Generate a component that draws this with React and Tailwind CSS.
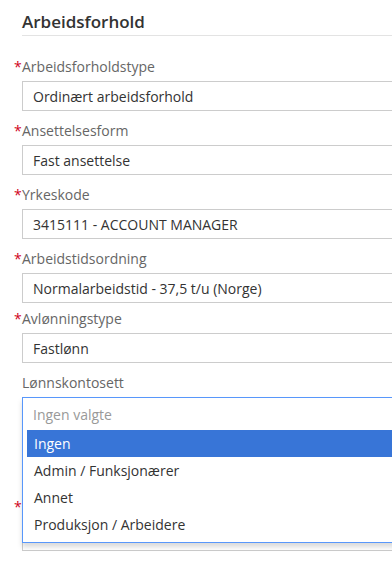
import React from 'react'

const font = { fontFamily: '"Open Sans", "Noto Sans", sans-serif' }

const fields = [
  { label: 'Arbeidsforholdstype', value: 'Ordinært arbeidsforhold', req: true },
  { label: 'Ansettelsesform', value: 'Fast ansettelse', req: true },
  { label: 'Yrkeskode', value: '3415111 - ACCOUNT MANAGER', req: true },
  { label: 'Arbeidstidsordning', value: 'Normalarbeidstid - 37,5 t/u (Norge)', req: true, tight: true },
  { label: 'Avlønningstype', value: 'Fastlønn', req: true },
]

const options = ['Ingen', 'Admin / Funksjonærer', 'Annet', 'Produksjon / Arbeidere']

function Label({ text, req }) {
  return (
    <div className="h-[20px] leading-[20px] text-[14px] text-[#666] mb-[4px] whitespace-nowrap">
      {req && <span className="inline-block w-[8px] -ml-[8px] text-[#d0021b]">*</span>}
      {text}
    </div>
  )
}

function Input({ value }) {
  return (
    <div className="h-[30px] w-[420px] border border-[#ccc] bg-white flex items-center pl-[10px] text-[14px] text-[#333] whitespace-nowrap">
      {value}
    </div>
  )
}

export default function App() {
  return (
    <div className="w-[392px] h-[562px] overflow-hidden bg-white pl-[22px]" style={font}>
      <div className="pt-[10px] pb-[1px] border-b border-[#e3e3e3] w-[420px]">
        <h2 className="text-[17px] leading-[24px] font-semibold text-[#333]">Arbeidsforhold</h2>
      </div>

      <div className="pt-[21px]">
        {fields.map(f => (
          <div key={f.label} className={f.tight ? 'mb-[6px]' : 'mb-[10px]'}>
            <Label text={f.label} req={f.req} />
            <Input value={f.value} />
          </div>
        ))}

        {/* Lønnskontosett with open dropdown */}
        <div className="relative">
          <Label text="Lønnskontosett" />
          <div className="relative">
            <Input value="" />
            <div className="absolute left-0 top-0 z-10 w-[420px] border border-[#5897fb] bg-white shadow-[0_4px_5px_rgba(0,0,0,0.15)]">
              <div className="h-[32px] flex items-center pl-[10px] text-[14px] text-[#999]">Ingen valgte</div>
              <ul className="ml-[4px] mb-[4px]">
                {options.map((o, i) => (
                  <li key={o}
                    className={i === 0
                      ? 'h-[27px] flex items-center pl-[7px] text-[14px] bg-[#3875d7] text-white'
                      : 'h-[27px] flex items-center pl-[7px] text-[14px] text-[#333]'}>
                    {o}
                  </li>
                ))}
              </ul>
            </div>
          </div>
        </div>

        {/* fields hidden behind the open dropdown */}
        <div className="mt-[10px] mb-[6px]">
          <Label text="" />
          <Input value="" />
        </div>
        <div>
          <Label text="" req />
          <Input value="" />
        </div>
      </div>
    </div>
  )
}
